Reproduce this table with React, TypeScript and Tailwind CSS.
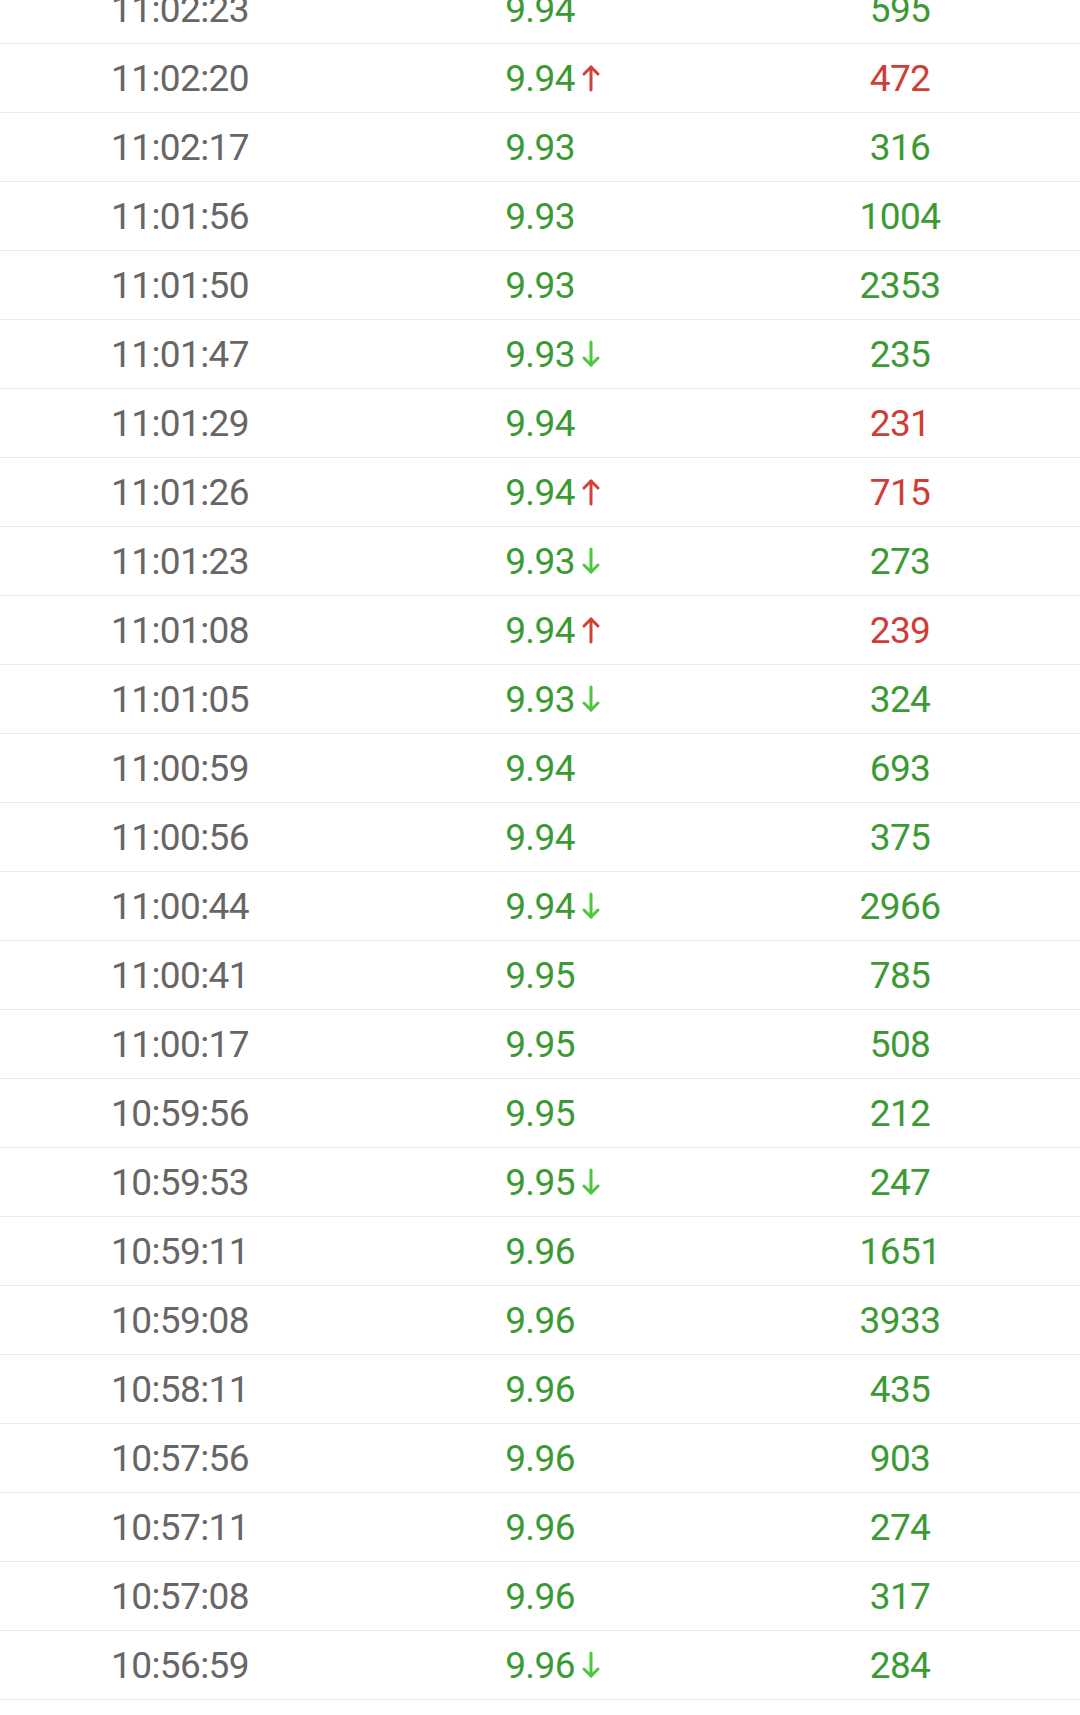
import React from "react";

type Row = { t: string; p: string; v: string; a?: "up" | "down"; red?: boolean };

const rows: Row[] = [
  { t: "11:02:23", p: "9.94", v: "595" },
  { t: "11:02:20", p: "9.94", v: "472", a: "up", red: true },
  { t: "11:02:17", p: "9.93", v: "316" },
  { t: "11:01:56", p: "9.93", v: "1004" },
  { t: "11:01:50", p: "9.93", v: "2353" },
  { t: "11:01:47", p: "9.93", v: "235", a: "down" },
  { t: "11:01:29", p: "9.94", v: "231", red: true },
  { t: "11:01:26", p: "9.94", v: "715", a: "up", red: true },
  { t: "11:01:23", p: "9.93", v: "273", a: "down" },
  { t: "11:01:08", p: "9.94", v: "239", a: "up", red: true },
  { t: "11:01:05", p: "9.93", v: "324", a: "down" },
  { t: "11:00:59", p: "9.94", v: "693" },
  { t: "11:00:56", p: "9.94", v: "375" },
  { t: "11:00:44", p: "9.94", v: "2966", a: "down" },
  { t: "11:00:41", p: "9.95", v: "785" },
  { t: "11:00:17", p: "9.95", v: "508" },
  { t: "10:59:56", p: "9.95", v: "212" },
  { t: "10:59:53", p: "9.95", v: "247", a: "down" },
  { t: "10:59:11", p: "9.96", v: "1651" },
  { t: "10:59:08", p: "9.96", v: "3933" },
  { t: "10:58:11", p: "9.96", v: "435" },
  { t: "10:57:56", p: "9.96", v: "903" },
  { t: "10:57:11", p: "9.96", v: "274" },
  { t: "10:57:08", p: "9.96", v: "317" },
  { t: "10:56:59", p: "9.96", v: "284", a: "down" },
];

function Arrow({ dir }: { dir: "up" | "down" }) {
  const color = dir === "up" ? "#d3403a" : "#4cc73c";
  return (
    <svg
      width="20"
      height="28"
      viewBox="0 0 20 28"
      className="absolute left-full top-1/2 -translate-y-1/2 ml-[6px]"
      fill="none"
      stroke={color}
      strokeWidth="3"
      strokeLinecap="round"
      strokeLinejoin="round"
    >
      {dir === "up" ? (
        <>
          <path d="M10 3 L10 26" />
          <path d="M3 10 L10 3 L17 10" />
        </>
      ) : (
        <>
          <path d="M10 2 L10 25" />
          <path d="M3 18 L10 25 L17 18" />
        </>
      )}
    </svg>
  );
}

export default function App() {
  return (
    <div
      className="w-[1080px] h-[1715px] bg-white overflow-hidden"
      style={{ fontFamily: "Roboto, 'Noto Sans', sans-serif" }}
    >
      <div className="mt-[-25px]">
        {rows.map((r, i) => (
          <div
            key={i}
            className="grid grid-cols-3 h-[69px] border-b border-[#ebebeb] items-center text-[37px] leading-none tracking-[-0.6px]"
          >
            <div className="text-center text-[#666666]">{r.t}</div>
            <div className="flex justify-center">
              <span className="relative text-[#3c9a34]">
                {r.p}
                {r.a && <Arrow dir={r.a} />}
              </span>
            </div>
            <div className={`text-center ${r.red ? "text-[#cf3d38]" : "text-[#3c9a34]"}`}>{r.v}</div>
          </div>
        ))}
      </div>
    </div>
  );
}
